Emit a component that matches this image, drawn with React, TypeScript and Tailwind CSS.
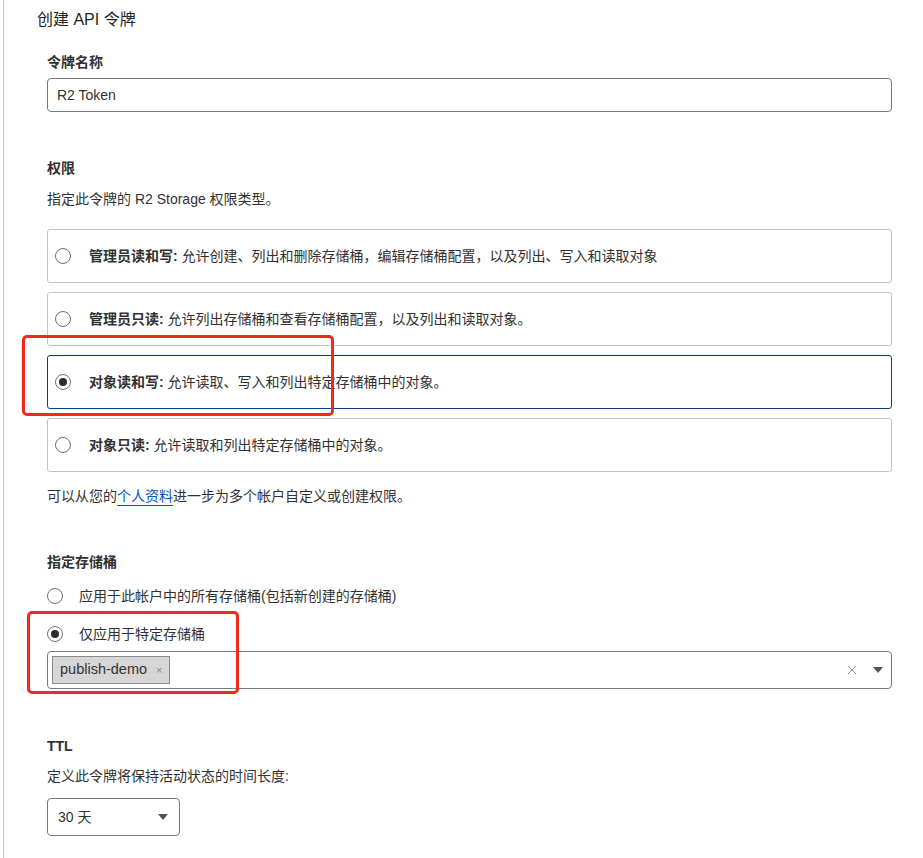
import React from "react";

const font = { fontFamily: '"Liberation Sans", "Noto Sans CJK SC", sans-serif' };

function Radio({ checked }: { checked?: boolean }) {
  return (
    <span className="flex h-[16px] w-[16px] shrink-0 items-center justify-center rounded-full border border-[#6f6f6f] bg-white">
      {checked && <span className="h-[8px] w-[8px] rounded-full bg-[#2b2b2b]" />}
    </span>
  );
}

function Card({ title, desc, checked }: { title: string; desc: string; checked?: boolean }) {
  return (
    <div
      className={
        "flex h-[54px] items-center rounded-[3px] border pl-[7px] " +
        (checked ? "border-[#0b3a8c]" : "border-[#c4c4c4]")
      }
    >
      <Radio checked={checked} />
      <span className="ml-[18px] text-[14px] text-[#313131]">
        <span className="font-bold">{title}:</span> {desc}
      </span>
    </div>
  );
}

export default function App() {
  return (
    <div className="relative min-h-[858px] w-[923px] bg-white text-[#313131]" style={font}>
      <div className="ml-[3px] min-h-[858px] border-l border-[#c9c9c9]">
        <div className="pl-[33px] pt-[8px]">
          <h1 className="h-[24px] text-[16px] leading-[24px] text-[#222]">创建 API 令牌</h1>
        </div>

        <div className="pl-[43px] pr-[31px]">
          <div className="mt-[20px] h-[20px] text-[14px] font-bold leading-[20px]">令牌名称</div>
          <div className="mt-[6px] flex h-[34px] items-center rounded-[4px] border border-[#7a7a7a] px-[9px] text-[14px]">
            R2 Token
          </div>

          <div className="mt-[46px] h-[20px] text-[14px] font-bold leading-[20px]">权限</div>
          <div className="mt-[11px] h-[20px] text-[14px] leading-[20px]">指定此令牌的 R2 Storage 权限类型。</div>

          <div className="mt-[20px] flex flex-col gap-[9px]">
            <Card title="管理员读和写" desc="允许创建、列出和删除存储桶，编辑存储桶配置，以及列出、写入和读取对象" />
            <Card title="管理员只读" desc="允许列出存储桶和查看存储桶配置，以及列出和读取对象。" />
            <Card title="对象读和写" desc="允许读取、写入和列出特定存储桶中的对象。" checked />
            <Card title="对象只读" desc="允许读取和列出特定存储桶中的对象。" />
          </div>

          <div className="mt-[14px] h-[20px] text-[14px] leading-[20px]">
            可以从您的
            <a className="border-b border-[#0051c3] pb-[1px] text-[#0051c3]" href="#">
              个人资料
            </a>
            进一步为多个帐户自定义或创建权限。
          </div>

          <div className="mt-[46px] h-[20px] text-[14px] font-bold leading-[20px]">指定存储桶</div>
          <div className="mt-[14px] flex h-[20px] items-center text-[14px]">
            <Radio />
            <span className="ml-[16px]">应用于此帐户中的所有存储桶(包括新创建的存储桶)</span>
          </div>
          <div className="mt-[18px] flex h-[20px] items-center text-[14px]">
            <Radio checked />
            <span className="ml-[16px]">仅应用于特定存储桶</span>
          </div>
          <div className="mt-[7px] flex h-[38px] items-center rounded-[4px] border border-[#7a7a7a] pl-[4px] pr-[8px]">
            <span className="flex h-[28px] items-center border border-[#8a8a8a] bg-[#d6d6d6] pl-[7px] pr-[6px] text-[14.5px] text-[#333]">
              publish-demo
              <span className="ml-[9px] text-[11px] text-[#8a8a8a]">×</span>
            </span>
            <span className="flex-1" />
            <svg width="10" height="10" viewBox="0 0 10 10" className="mr-[16px]">
              <path d="M1 1L9 9M9 1L1 9" stroke="#9a9a9a" strokeWidth="1" />
            </svg>
            <svg width="10" height="6" viewBox="0 0 10 6">
              <path d="M0 0H10L5 6Z" fill="#555" />
            </svg>
          </div>

          <div className="mt-[47px] h-[20px] text-[14px] font-bold leading-[20px]">TTL</div>
          <div className="mt-[10px] h-[20px] text-[14px] leading-[20px]">定义此令牌将保持活动状态的时间长度:</div>
          <div className="mt-[12px] flex h-[38px] w-[133px] items-center justify-between rounded-[4px] border border-[#7a7a7a] pl-[10px] pr-[11px] text-[14px]">
            <span>30 天</span>
            <svg width="10" height="6" viewBox="0 0 10 6">
              <path d="M0 0H10L5 6Z" fill="#555" />
            </svg>
          </div>
        </div>
      </div>

      <div className="absolute left-[22px] top-[335px] h-[81px] w-[312px] rounded-[5px] border-[3px] border-[#f0291c]" />
      <div className="absolute left-[27px] top-[611px] h-[83px] w-[212px] rounded-[5px] border-[3px] border-[#f0291c]" />
    </div>
  );
}
